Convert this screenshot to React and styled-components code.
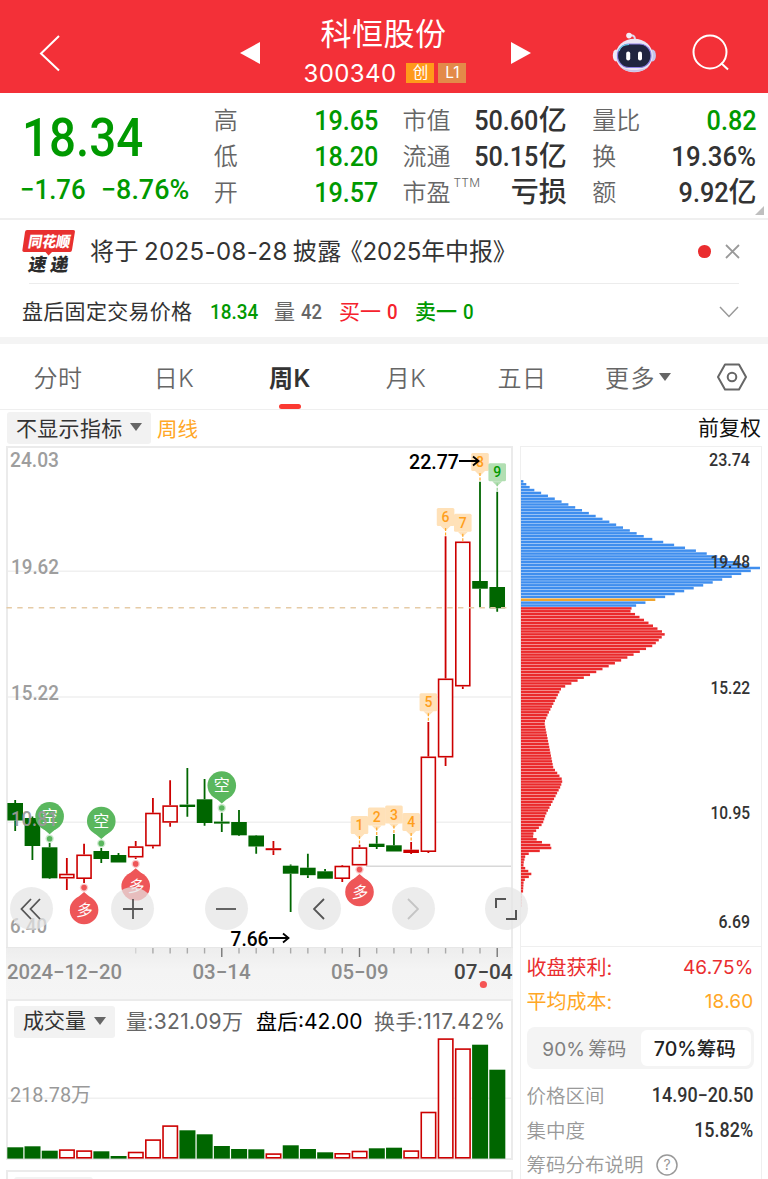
import styled, { createGlobalStyle, css } from "styled-components";

const colors = {
  brand: "#f33038",
  green: "#009900",
  candleGreen: "#006600",
  candleRed: "#cc0000",
  red: "#ea2d2f",
  orange: "#ffa726",
  text: "#333333",
  gray: "#666666",
  light: "#999999",
  line: "#ebebeb",
};

const GlobalStyle = createGlobalStyle`
  * {
    box-sizing: border-box;
  }

  body {
    margin: 0;
    background: #fff;
    overflow: hidden;
  }
`;

const Page = styled.div`
  width: 768px;
  height: 1179px;
  overflow: hidden;
  background: #fff;
  color: ${colors.text};
  font-family: Inter, "Noto Sans CJK SC", sans-serif;
  white-space: nowrap;
`;

const Label = styled.span`
  display: inline-block;
  font-size: ${({ $size }) => $size || 24}px;
  font-weight: ${({ $weight }) => $weight || 350};
  letter-spacing: ${({ $spacing }) => $spacing || 0}px;
  color: ${({ $color }) => $color || "inherit"};
`;

const Num = styled(Label)`
  font-family: Roboto, "Noto Sans CJK SC", sans-serif;
  font-weight: ${({ $weight }) => $weight || 500};
  transform: scaleX(${({ $scale }) => $scale || 0.89});
  transform-origin: ${({ $origin }) => $origin || "right"} center;
`;

/* header */

const Header = styled.header`
  display: flex;
  align-items: center;
  height: 93px;
  padding: 12px 38px 0 39px;
  background: ${colors.brand};
  color: #fff;
`;

const StockNav = styled.div`
  display: flex;
  flex: 1;
  align-items: center;
  justify-content: space-between;
  margin: 0 81px 0 179px;
`;

const StockTitle = styled.div`
  display: flex;
  flex-direction: column;
  align-items: center;
  line-height: 39px;
  margin: 1px 4px 0 0;
`;

const StockCode = styled.div`
  display: flex;
  align-items: center;
  gap: 5px;
  height: 39px;
  padding: 1px 0 0 3px;
`;

const Tag = styled.span`
  width: 28px;
  height: 20px;
  margin-left: ${({ $first }) => ($first ? 5 : -1)}px;
  background: ${({ $bg }) => $bg};
  font-size: 15.5px;
  line-height: 20px;
  text-align: center;
`;

/* quote */

const Quote = styled.section`
  position: relative;
  display: flex;
  height: 127px;
  padding: 8.5px 11.5px 0 20px;
  border-bottom: 2px solid #efefef;
`;

const Price = styled.div`
  width: 194px;
  color: ${colors.green};
`;

const PriceLine = styled.div`
  display: flex;
  height: ${({ $height }) => $height}px;
  line-height: ${({ $height }) => $height}px;
  padding-left: ${({ $left }) => $left || 0}px;
`;

const QuoteColumn = styled.div`
  width: 164.5px;
  margin-right: ${({ $gap }) => $gap || 0}px;
`;

const QuoteRow = styled.div`
  display: flex;
  height: 36px;
  line-height: 37px;
`;

const QuoteName = styled(Label)`
  flex: 1;
  padding-top: 0.5px;
  color: ${colors.gray};
`;

const Ttm = styled.sup`
  font-size: 12px;
  letter-spacing: 0.2px;
  line-height: 12px;
  margin-left: 3px;
  vertical-align: 14px;
`;

const Corner = styled.i`
  position: absolute;
  right: 4px;
  bottom: 3px;
  border-left: 9px solid transparent;
  border-bottom: 9px solid #bfbfbf;
`;

/* notice rows */

const Notice = styled.section`
  display: flex;
  align-items: center;
  height: 63px;
  padding: 0 28.5px 0 22px;
`;

const NoticeText = styled.div`
  flex: 1;
  padding: 2px 0 0 15px;
  line-height: 40px;
  word-spacing: -2px;
`;

const ReportName = styled.span`
  margin-left: -3px;
  letter-spacing: -0.1px;
`;

const Dot = styled.i`
  width: 12.6px;
  height: 12.6px;
  margin-right: 14px;
  border-radius: 50%;
  background: ${colors.red};
`;

const AfterHours = styled.section`
  display: flex;
  align-items: center;
  height: 54px;
  margin: 0 29px;
  border-top: 1.5px solid #ececec;
  line-height: 52px;
  padding-top: 3px;

  svg {
    margin-left: auto;
  }
`;

const AfterItem = styled.div`
  display: flex;
  width: ${({ $width }) => $width}px;
  margin-left: ${({ $shift }) => $shift || 0}px;
  color: ${({ $color }) => $color};
`;

/* tabs */

const Tabs = styled.nav`
  display: flex;
  height: 73px;
  border-top: 7px solid #f4f4f4;
  border-bottom: 1.5px solid #efefef;
`;

const Tab = styled.div`
  position: relative;
  display: flex;
  align-items: center;
  justify-content: center;
  width: ${({ $width }) => $width || 116}px;
  font-size: 24px;
  font-weight: 350;
  letter-spacing: ${({ $spacing }) => $spacing || 0.5}px;
  color: ${colors.gray};
  ${({ $active }) =>
    $active &&
    css`
      font-weight: 600;
      color: ${colors.text};

      &::after {
        content: "";
        position: absolute;
        bottom: 0;
        width: 22px;
        height: 5px;
        border-radius: 3px;
        background: #fb3a32;
      }
    `}
`;

const Caret = styled.i`
  margin-left: ${({ $gap }) => $gap || 3}px;
  border: 6px solid transparent;
  border-top: 8px solid ${colors.gray};
  border-bottom: 0;
`;

const Toolbar = styled.div`
  display: flex;
  align-items: center;
  height: 36px;
  padding: 0 7px 1px;
`;

const Chip = styled.div`
  display: flex;
  align-items: center;
  justify-content: space-between;
  width: ${({ $width }) => $width}px;
  height: 32px;
  padding: 0 9px 1px;
  margin-right: ${({ $gap }) => $gap || 0}px;
  border-radius: 3px;
  background: #f2f2f2;
`;

const AdjustType = styled(Label)`
  margin: -3px 0 0 auto;
  color: #111;
`;

/* chart area */

const ChartArea = styled.main`
  display: flex;
  gap: 7px;
  height: 734px;
  padding: 0 7px 0 6px;
`;

const ChartColumn = styled.div`
  width: 506.5px;
`;

const KLine = styled.div`
  position: relative;
  height: 501px;
  border: 2px solid ${colors.line};
  border-bottom: 0;

  > svg {
    display: block;
    margin: -2px;
    overflow: visible;
  }
`;

const Controls = styled.div`
  position: absolute;
  z-index: 1;
  left: 1.5px;
  top: 439px;
  display: flex;
  gap: 50.4px;
`;

const RoundButton = styled.button`
  display: flex;
  align-items: center;
  justify-content: center;
  width: 43px;
  height: 43px;
  padding: 0;
  border: 0;
  border-radius: 50%;
  background: rgba(228, 228, 228, 0.72);

  &:first-child {
    margin-right: 8.5px;
  }
`;

const TimeAxis = styled.div`
  height: 52px;
  background: linear-gradient(180deg, #ededed, #f4f4f4 45%, #f5f5f5);

  svg {
    display: block;
  }
`;

const VolumePanel = styled.div`
  height: 160.5px;
  border: 2px solid ${colors.line};

  > svg {
    display: block;
    margin-left: -2px;
  }
`;

const VolumeHeader = styled.div`
  display: flex;
  align-items: center;
  height: 37px;
  padding: 4px 0 0 6px;
  line-height: 32px;
`;

const VolumeItem = styled(Label)`
  width: ${({ $width }) => $width}px;
`;

const NextPanel = styled.div`
  height: 12px;
  margin-top: 10.5px;
  padding: 5px 6px 0;
  border: 2px solid ${colors.line};
  border-bottom: 0;
`;

const NextChip = styled.div`
  width: 79px;
  height: 6px;
  border-radius: 3px 3px 0 0;
  background: #f2f2f2;
`;

const Distribution = styled.aside`
  width: 242px;
  border: 1.5px solid #efefef;
  border-bottom: 0;

  > svg {
    display: block;
  }
`;

const Details = styled.div`
  padding: 3.5px 7px 0 6px;
  border-top: 1.5px solid #efefef;
`;

const DetailRow = styled.div`
  display: flex;
  align-items: center;
  justify-content: space-between;
  height: 34.5px;
  line-height: 34.5px;
  color: ${({ $color }) => $color || colors.light};
`;

const HelpRow = styled(DetailRow)`
  justify-content: flex-start;
  gap: 12px;
`;

const Segmented = styled.div`
  display: flex;
  height: 42px;
  margin: 7.5px 0 10px;
  padding: 3px;
  border-radius: 8px;
  background: #f4f4f4;
`;

const Segment = styled.div`
  display: flex;
  align-items: center;
  justify-content: center;
  width: ${({ $width }) => $width}px;
  padding: 0 2px 2px 0;
  border-radius: 6px;
  word-spacing: -2px;
  background: ${({ $active }) => ($active ? "#fff" : "transparent")};
  color: ${({ $active }) => ($active ? "#222" : "#808080")};
`;

// [rising, high, bodyTop, bodyBottom, low, volumeTop], y in page pixels
const candles = [
  [0, 800, 803, 820.5, 831, 1147.3],
  [0, 816.5, 818, 846, 860, 1146.3],
  [0, 843, 847.3, 878.3, 879, 1150.7],
  [1, 858, 873.7, 878.5, 890, 1149.3],
  [1, 843.7, 854.5, 879, 883, 1150.3],
  [0, 848, 851, 859, 863, 1151.3],
  [0, 853, 855, 862.5, 862.5, 1156],
  [1, 841, 846.3, 857.5, 859, 1151.7],
  [1, 798, 812.7, 846.3, 848.5, 1139.3],
  [1, 780.3, 805.3, 822.7, 826.7, 1125.3],
  [0, 768, 804.6, 807, 816.7, 1130.3],
  [0, 779, 799.3, 823, 825.7, 1134.3],
  [0, 812.7, 821.6, 823.6, 832, 1146],
  [0, 810, 822, 835.3, 836, 1149],
  [0, 835, 835.5, 846.5, 853.7, 1149.3],
  [1, 841, 848.2, 850.2, 855, 1153.3],
  [0, 864.5, 865.7, 873.7, 912, 1145.3],
  [0, 853.7, 867.7, 875.2, 878, 1149],
  [0, 869, 871.3, 878.7, 878.7, 1152.3],
  [1, 865, 865.7, 879, 882, 1153],
  [1, 844.7, 847.3, 865.5, 865.5, 1150.7],
  [0, 836, 843.7, 847, 849, 1148.3],
  [0, 834, 845.3, 851.5, 851.5, 1147.7],
  [1, 842, 849.7, 853, 854, 1150.3],
  [1, 722, 756.5, 852, 853, 1111.7],
  [1, 536.3, 678.5, 757.5, 766, 1038.3],
  [1, 541.5, 541.5, 686.5, 689, 1048.3],
  [0, 481.7, 581, 588.7, 607.3, 1044.7],
  [0, 491.7, 587, 608.3, 611.7, 1069.7],
];

const xAt = (i) => 15.2 + i * 17.215;

// [candle index, tag top]
const countTags = [
  [20, 816],
  [21, 807.5],
  [22, 805.5],
  [23, 813],
  [24, 693.3],
  [25, 508],
  [26, 513.7],
  [27, 453],
  [28, 463.3],
];

// [candle index, pin centre, short signal]
const pins = [
  [2, 816.3, true],
  [5, 821, true],
  [12, 785.6, true],
  [4, 910, false],
  [7, 886.3, false],
  [20, 892, false],
];

// [y, bar length]
const chipShape = [
  [481.7, 2.7], [484.5, 5.5], [487.5, 9], [490.3, 13.5], [510.3, 60.7],
  [536, 121.5], [539, 130], [553.3, 184], [565.4, 228], [568.3, 240],
  [571.2, 230], [597, 145], [605.5, 116], [608.3, 111], [611.5, 109.7],
  [634, 144.7], [645.7, 132.7], [685, 48], [688.3, 41], [691.7, 39],
  [715, 27], [722.7, 23.7], [768.3, 32.7], [780.3, 42], [786.7, 40],
  [815, 25], [824, 22], [835, 11.7], [838, 13], [844, 24], [846.7, 34.7],
  [849.3, 28], [852.3, 13.7], [855, 5], [865, 2.5], [868, 4], [872.7, 9],
  [875.3, 11.7], [878, 6.5], [881, 3], [893, 2.3], [894, 1.2], [907, 1],
];

const chipLength = (y) => {
  const next = chipShape.findIndex(([py]) => py >= y);
  if (next <= 0) return chipShape[0][1];
  const [y0, w0] = chipShape[next - 1];
  const [y1, w1] = chipShape[next];
  return w0 + ((w1 - w0) * (y - y0)) / (y1 - y0);
};

const chipRows = Array.from({ length: 148 }, (_, i) => 481.7 + i * 2.8865);

const chipColor = (y) => {
  if (y > 598 && y < 600.9) return "#f0a52e";
  return y < 607 ? "#3f8eee" : "#ea2a2c";
};

const AxisText = ({ x, y, width, children, fill = colors.light, size = 20, weight = 500, anchor }) => (
  <text
    x={x}
    y={y}
    fill={fill}
    fontFamily='Roboto, "Noto Sans CJK SC", sans-serif'
    fontSize={size}
    fontWeight={weight}
    textLength={width}
    lengthAdjust="spacingAndGlyphs"
    textAnchor={anchor}
  >
    {children}
  </text>
);

const Candle = ({ data, x }) => {
  const [up, high, top, bottom, low] = data;
  const color = up ? colors.candleRed : colors.candleGreen;
  const hollow = up && bottom - top > 4;
  return (
    <g stroke={color} strokeWidth="1.8">
      <path d={`M${x} ${high}V${top}M${x} ${bottom}V${low}`} />
      {hollow ? (
        <rect x={x - 7} y={top + 0.8} width="14" height={bottom - top - 1.6} fill="#fff" strokeWidth="1.6" />
      ) : (
        <rect x={x - 7.8} y={top} width="15.6" height={bottom - top} fill={color} stroke="none" />
      )}
    </g>
  );
};

const Pin = ({ x, y, short }) => {
  const dir = short ? 1 : -1;
  const fill = short ? "#5ab75e" : "#ee5658";
  return (
    <g>
      <circle cx={x} cy={y + dir * 22.4} r="4.2" fill={fill} opacity="0.3" />
      <circle cx={x} cy={y + dir * 22.4} r="2.8" fill={fill} />
      <circle cx={x} cy={y} r="14.3" fill={fill} />
      <path d={`M${x - 7} ${y + dir * 12}L${x} ${y + dir * 18}L${x + 7} ${y + dir * 12}Z`} fill={fill} />
      <text
        transform={`translate(${x} ${y + 5.8}) skewX(${short ? 0 : -8})`}
        fill="#fff"
        fontFamily='"Noto Sans CJK SC", sans-serif'
        fontSize="16"
        fontWeight="400"
        textAnchor="middle"
      >
        {short ? "空" : "多"}
      </text>
    </g>
  );
};

const CountTag = ({ index, top, count }) => {
  const x = xAt(index);
  const last = count === 9;
  const fill = last ? "#b2dfb2" : "#ffe1b8";
  return (
    <g>
      <rect x={x - 8.8} y={top} width="17.6" height="18" rx="1.5" fill={fill} />
      <path d={`M${x - 5} ${top + 18}h10l-5 5z`} fill={fill} />
      <path
        d={`M${x} ${top + 20}V${candles[index][1]}`}
        stroke={last ? "#8fce8f" : colors.orange}
        strokeWidth="1.2"
        strokeDasharray="3 1.5"
      />
      <AxisText x={x} y={top + 14} size={14} weight={500} anchor="middle" fill={last ? colors.green : "#ff9f1c"}>
        {count}
      </AxisText>
    </g>
  );
};

const KLineChart = () => (
  <svg width="507" height="502" viewBox="6 446 507 502">
    <path d="M8 571.3H511M8 697H511M8 822.3H511" stroke="#f0f0f0" strokeWidth="1.4" />
    <path d="M366 866.3H511" stroke="#d8d8d8" strokeWidth="1.4" />
    {candles.map((data, i) => (
      <Candle key={i} data={data} x={xAt(i)} />
    ))}
    <path d="M6.5 607.8H507" stroke="#e6cba6" strokeWidth="1.6" strokeDasharray="5.4 5.35" />
    {pins.map(([i, y, short]) => (
      <Pin key={i} x={xAt(i)} y={y} short={short} />
    ))}
    {countTags.map(([i, top], n) => (
      <CountTag key={i} index={i} top={top} count={n + 1} />
    ))}
    <g opacity="0.95">
      <AxisText x={10} y={467} width={49}>24.03</AxisText>
      <AxisText x={11} y={574} width={48}>19.62</AxisText>
      <AxisText x={11} y={700} width={48}>15.22</AxisText>
      <AxisText x={11} y={825.5} width={47}>10.81</AxisText>
      <AxisText x={10} y={933} width={37}>6.40</AxisText>
    </g>
    <AxisText x={409} y={468.5} width={50} fill="#000" size={21}>22.77</AxisText>
    <AxisText x={230.5} y={945.5} width={38} fill="#000" size={21}>7.66</AxisText>
    <path
      d="M459 461H478M473 456.5L478.5 461L473 465.5M269 938H288M283 933.5L288.5 938L283 942.5"
      fill="none"
      stroke="#000"
      strokeWidth="1.8"
    />
  </svg>
);

const TimeScale = () => (
  <svg width="507" height="51" viewBox="6 947 507 51">
    <path d="M6 947H513" stroke="#e4e4e4" strokeWidth="1.6" />
    {candles.map((_, i) => {
      if (i < 7) return null;
      const major = i === 12 || i === 20 || i === 28;
      return (
        <path
          key={i}
          d={`M${xAt(i)} 948V${major ? 957 : 953.5}`}
          stroke={major ? "#777" : "#aaa"}
          strokeWidth="1.4"
          opacity={i === 7 ? 0.4 : 1}
        />
      );
    })}
    <AxisText x={7} y={979} width={115} fill="#8c8c8c">2024−12−20</AxisText>
    <AxisText x={192.5} y={979} width={58} fill="#8c8c8c">03−14</AxisText>
    <AxisText x={331} y={979} width={57.5} fill="#8c8c8c">05−09</AxisText>
    <AxisText x={454} y={979} width={58.5} fill="#444">07−04</AxisText>
    <circle cx="483.4" cy="984.5" r="3.6" fill="#f55555" />
  </svg>
);

const VolumeChart = () => (
  <svg width="507" height="121" viewBox="6 1038 507 121">
    <path d="M8 1098.3H511" stroke="#f0f0f0" strokeWidth="1.4" />
    {candles.map(([up, , , , , top], i) =>
      up ? (
        <rect
          key={i}
          x={xAt(i) - 7.1}
          y={top + 0.8}
          width="14.4"
          height={1157 - top}
          fill="#fff"
          stroke={colors.candleRed}
          strokeWidth="1.6"
        />
      ) : (
        <rect key={i} x={xAt(i) - 7.9} y={top} width="16" height={1158.6 - top} fill={colors.candleGreen} />
      )
    )}
    <AxisText x={10} y={1101.5} width={81} weight={400}>218.78万</AxisText>
  </svg>
);

const DistributionChart = () => (
  <svg width="239" height="499" viewBox="521 448 239 499">
    {chipRows.map((y) => (
      <rect
        key={y}
        x="520"
        y={y - 0.55}
        width={chipLength(y) + 0.7}
        height="2.5"
        fill={chipColor(y)}
        opacity={y > 893 ? 0.4 : 1}
      />
    ))}
    <AxisText x={750} y={466.5} width={41} anchor="end" size={18} fill="#333">23.74</AxisText>
    <AxisText x={750} y={568.5} width={39.5} anchor="end" size={18} fill="#333">19.48</AxisText>
    <AxisText x={750} y={694.5} width={39.5} anchor="end" size={18} fill="#333">15.22</AxisText>
    <AxisText x={750} y={819.5} width={39.5} anchor="end" size={18} fill="#333">10.95</AxisText>
    <AxisText x={750} y={929} width={31.5} anchor="end" size={18} fill="#333">6.69</AxisText>
  </svg>
);

const Robot = () => (
  <svg width="44" height="42" viewBox="611 31 44 42">
    <path d="M628 34.5c4-.8 6 .5 6 4" fill="none" stroke="#ded9ee" strokeWidth="2" />
    <circle cx="628" cy="34.6" r="2.8" fill="#f3effa" />
    <ellipse cx="615" cy="54.5" rx="3.2" ry="6" fill="#eceafa" />
    <ellipse cx="651.5" cy="54.5" rx="3.4" ry="6" fill="#c3c3ee" />
    <ellipse cx="633.2" cy="54.5" rx="18.6" ry="16.8" fill="#eae6f4" />
    <path d="M617 62c4 12 28 12 33 0-2 5-9 7-17 7s-14-2-16-7z" fill="#cbc4e6" />
    <rect x="616.5" y="43" width="33.5" height="23.5" rx="11.5" fill="#20253f" stroke="#8d7fe4" strokeWidth="1.2" />
    <path d="M618 50c1-4 5-6.500 10-6.500" fill="none" stroke="#65d3e8" strokeWidth="1.2" />
    <rect x="625.2" y="50.600" width="4" height="9" rx="2" fill="#fff" />
    <rect x="637" y="50.600" width="4" height="9" rx="2" fill="#fff" />
  </svg>
);

const ExpressLogo = () => (
  <svg width="53" height="46" viewBox="22 228 53 46">
    <path d="M27 229H73Q75.300 229 74.900 231L72 249Q71.700 251 70 251H52L48.500 254.500L45.500 251H24Q22 251 22.400 249L25 231Q25.300 229 27 229Z" fill="#e8302f" />
    <g fontFamily='"Noto Sans CJK SC", sans-serif' fontWeight="900">
      <text transform="translate(27.500 246) skewX(-10)" fontSize="15" fill="#fff" textLength="42" lengthAdjust="spacingAndGlyphs">
        同花顺
      </text>
      <text transform="translate(27.500 270) skewX(-10)" fontSize="18" fill="#2b2b2b" textLength="40" lengthAdjust="spacing">
        速递
      </text>
    </g>
  </svg>
);

const StrokeIcon = ({ w, h, d, color = "#555", width = 1.8 }) => (
  <svg width={w} height={h} viewBox={`0 0 ${w} ${h}`} fill="none" stroke={color} strokeWidth={width}>
    <path d={d} />
  </svg>
);

// [name, value, color, unit]
const quoteColumns = [
  {
    gap: 24.5,
    rows: [
      ["高", "19.65", colors.green],
      ["低", "18.20", colors.green],
      ["开", "19.57", colors.green],
    ],
  },
  {
    gap: 25.5,
    rows: [
      ["市值", "50.60", null, "亿"],
      ["流通", "50.15", null, "亿"],
      ["市盈", "", null, "亏损"],
    ],
  },
  {
    gap: 0,
    rows: [
      ["量比", "0.82", colors.green],
      ["换", "19.36%"],
      ["额", "9.92", null, "亿"],
    ],
  },
];

const App = () => {
  return (
    <Page>
      <GlobalStyle />
      <Header>
        <StrokeIcon w={22} h={38} d="M20 2L2 19.500L20 36.500" color="#fff" width={2} />
        <StockNav>
          <svg width="20" height="22">
            <path d="M0 11L20 0V22Z" fill="#fff" />
          </svg>
          <StockTitle>
            <Label $size={31} $spacing={0.5} $weight={400}>科恒股份</Label>
            <StockCode>
              <Label $size={24} $spacing={0.4} $weight={400}>300340</Label>
              <Tag $first $bg="#ff9a1a">创</Tag>
              <Tag $bg="#e38a49">L1</Tag>
            </StockCode>
          </StockTitle>
          <svg width="20" height="22">
            <path d="M20 11L0 0V22Z" fill="#fff" />
          </svg>
        </StockNav>
        <Robot />
        <svg width="38" height="38" viewBox="0 0 38 38" fill="none" stroke="#fff" strokeWidth="2" style={{ marginLeft: 36 }}>
          <circle cx="18" cy="18" r="16.500" />
          <path d="M29 29L36 35.500" />
        </svg>
      </Header>

      <Quote>
        <Price>
          <PriceLine $height={72} $left={2}>
            <Num $size={54} $origin="left" $scale={0.88}>18.34</Num>
          </PriceLine>
          <PriceLine $height={32}>
            <Num $size={28} $origin="left" $scale={0.92}>−1.76</Num>
            <Num $size={28} $origin="left" $scale={0.96} style={{ marginLeft: 10 }}>−8.76%</Num>
          </PriceLine>
        </Price>
        {quoteColumns.map(({ gap, rows }) => (
          <QuoteColumn key={rows[0][0]} $gap={gap}>
            {rows.map(([name, value, color, unit]) => (
              <QuoteRow key={name}>
                <QuoteName>
                  {name}
                  {name === "市盈" && <Ttm>TTM</Ttm>}
                </QuoteName>
                <Num $size={28} $color={color} $scale={value.endsWith("%") ? 0.92 : 0.9}>{value}</Num>
                {unit && <Label $size={28} $weight={500}>{unit}</Label>}
              </QuoteRow>
            ))}
          </QuoteColumn>
        ))}
        <Corner />
      </Quote>

      <Notice>
        <ExpressLogo />
        <NoticeText>
          <Label $spacing={0.4} $weight={400}>
            将于 2025-08-28 披露<ReportName>《2025年中报》</ReportName>
          </Label>
        </NoticeText>
        <Dot />
        <StrokeIcon w={15} h={15} d="M1 1L14 14M14 1L1 14" color="#999" />
      </Notice>

      <AfterHours>
        <AfterItem $width={188} $shift={-7}>
          <Label $size={21} $spacing={0.3} $weight={400}>盘后固定交易价格</Label>
        </AfterItem>
        <AfterItem $width={64} $color={colors.green}>
          <Num $size={21} $origin="left" $scale={0.9}>18.34</Num>
        </AfterItem>
        <AfterItem $width={65} $color={colors.gray}>
          <Label $size={21} $weight={400}>量</Label>
          <Num $size={21} $origin="left" $scale={0.88} style={{ marginLeft: 6 }}>42</Num>
        </AfterItem>
        <AfterItem $width={76} $color="#f5222d">
          <Label $size={21} $weight={400}>买一</Label>
          <Num $size={21} $origin="left" style={{ marginLeft: 6 }}>0</Num>
        </AfterItem>
        <AfterItem $width={76} $color={colors.green}>
          <Label $size={21} $weight={500}>卖一</Label>
          <Num $size={21} $origin="left" style={{ marginLeft: 6 }}>0</Num>
        </AfterItem>
        <StrokeIcon w={20} h={12} d="M1 1L10 10.500L19 1" color="#999" width={1.5} />
      </AfterHours>

      <Tabs>
        <Tab>分时</Tab>
        <Tab>日K</Tab>
        <Tab $active>周K</Tab>
        <Tab>月K</Tab>
        <Tab>五日</Tab>
        <Tab $spacing={1.500}>
          更多
          <Caret />
        </Tab>
        <Tab $width={72}>
          <svg width="30" height="28" viewBox="0 0 30 28" fill="none" stroke="#666" strokeWidth="2">
            <path d="M8 1.500H22L29 14L22 26.500H8L1 14Z" strokeLinejoin="round" />
            <circle cx="15" cy="14" r="4.300" />
          </svg>
        </Tab>
      </Tabs>

      <Toolbar>
        <Chip $width={144} $gap={6}>
          <Label $size={21} $spacing={0.3} $weight={400}>不显示指标</Label>
          <Caret />
        </Chip>
        <Label $size={20.500} $color={colors.orange} $weight={400}>周线</Label>
        <AdjustType $size={21} $weight={400}>前复权</AdjustType>
      </Toolbar>

      <ChartArea>
        <ChartColumn>
          <KLine>
            <KLineChart />
            <Controls>
              <RoundButton>
                <StrokeIcon w={22} h={22} d="M11 1L1.500 11L11 21M20 1L10.500 11L20 21" />
              </RoundButton>
              <RoundButton>
                <StrokeIcon w={20} h={20} d="M10 0V20M0 10H20" />
              </RoundButton>
              <RoundButton>
                <StrokeIcon w={20} h={20} d="M0 10H20" />
              </RoundButton>
              <RoundButton>
                <StrokeIcon w={14} h={22} d="M11 1L1 11L11 21" />
              </RoundButton>
              <RoundButton>
                <StrokeIcon w={12} h={22} d="M1 1L11 11L1 21" color="#c4c4c4" />
              </RoundButton>
              <RoundButton>
                <StrokeIcon w={24} h={24} d="M2 11V2H12M22 13V22H12" width={2} />
              </RoundButton>
            </Controls>
          </KLine>
          <TimeAxis>
            <TimeScale />
          </TimeAxis>
          <VolumePanel>
            <VolumeHeader>
              <Chip $width={101} $gap={11}>
                <Label $size={21} $weight={400}>成交量</Label>
                <Caret />
              </Chip>
              <VolumeItem $size={21} $width={130} $spacing={0.35} $color={colors.gray} $weight={400}>量:321.09万</VolumeItem>
              <VolumeItem $size={21} $width={118} $color="#000" $weight={400}>盘后:42.00</VolumeItem>
              <VolumeItem $size={21} $spacing={0.4} $color={colors.gray} $weight={400}>换手:117.42%</VolumeItem>
            </VolumeHeader>
            <VolumeChart />
          </VolumePanel>
          <NextPanel>
            <NextChip />
          </NextPanel>
        </ChartColumn>

        <Distribution>
          <DistributionChart />
          <Details>
            <DetailRow $color={colors.red}>
              <Label $size={20} $weight={400}>收盘获利:</Label>
              <Label $size={19} $weight={400} $spacing={0.2}>46.75%</Label>
            </DetailRow>
            <DetailRow $color={colors.orange}>
              <Label $size={20} $weight={400}>平均成本:</Label>
              <Label $size={19} $weight={400} $spacing={0.2}>18.60</Label>
            </DetailRow>
            <Segmented>
              <Segment $width={112}>
                <Label $size={19} $weight={400}>90% 筹码</Label>
              </Segment>
              <Segment $active $width={110}>
                <Label $size={19.500} $weight={500}>70%筹码</Label>
              </Segment>
            </Segmented>
            <DetailRow>
              <Label $size={19.500}>价格区间</Label>
              <Num $size={19.500} $color="#333" $scale={0.92}>14.90−20.50</Num>
            </DetailRow>
            <DetailRow>
              <Label $size={19.500}>集中度</Label>
              <Num $size={19.500} $color="#333" $scale={0.92}>15.82%</Num>
            </DetailRow>
            <HelpRow>
              <Label $size={19.500}>筹码分布说明</Label>
              <svg width="22" height="22" viewBox="0 0 22 22">
                <circle cx="11" cy="11" r="10" fill="none" stroke="#999" strokeWidth="1.500" />
                <text x="11" y="16" fontSize="14" textAnchor="middle" fill="#999">?</text>
              </svg>
            </HelpRow>
          </Details>
        </Distribution>
      </ChartArea>
    </Page>
  );
};

export default App;
